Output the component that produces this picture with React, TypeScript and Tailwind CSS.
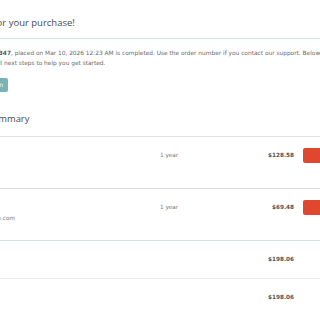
import React from "react";

const sans = { fontFamily: '"DejaVu Sans", "Open Sans", sans-serif' };

export default function App() {
  return (
    <div className="w-[320px] h-[320px] overflow-hidden bg-white relative" style={{ fontFamily: '"Open Sans", "Noto Sans", sans-serif' }}>
      <div className="h-[39px] border-b border-[#d4e6e8] pt-[16px]">
        <h1 className="ml-[-55px] text-[9.5px] leading-[13px] text-[#4a4a4a] whitespace-nowrap">Thank you for your purchase!</h1>
      </div>
      <div className="mt-[9px] text-[5.85px] leading-[10px] text-[#6a6a6a] whitespace-nowrap" style={sans}>
        <div className="ml-[-42px]">
          Your order <span className="font-bold text-[#555]">#1347</span>, placed on Mar 10, 2026 12:23 AM is completed. Use the order number if you contact our support. Below you will find your order details
        </div>
        <div className="ml-[-17.5px]">and all next steps to help you get started.</div>
      </div>
      <div
        className="mt-[10px] ml-[-32px] h-[14px] w-[40px] rounded-[2px] bg-[#79b3b6] text-white text-[6px] leading-[14px] text-right pr-[5px] whitespace-nowrap"
        style={sans}
      >
        Login
      </div>
      <div className="mt-[21px] h-[12px] ml-[-41px] text-[9.4px] leading-[12px] text-[#4a4a4a] whitespace-nowrap">Order Summary</div>
      <div className="mt-[11px] border-t border-[#e3e3e3] w-[360px]" style={sans}>
        <div className="h-[52px] border-b border-[#dcdcdc] flex items-start pt-[15px] text-[5.7px] leading-[7px]">
          <div className="w-[160px]" />
          <div className="w-[100px] text-[#777]">1 year</div>
          <div className="w-[34px] text-right font-bold text-[#555] text-[5.7px]">$128.58</div>
          <div className="ml-[9px] mt-[-4px] h-[15px] w-[40px] rounded-[2px] bg-[#e1462f]" />
        </div>
        <div className="h-[52px] border-b border-[#d3e3e3] flex items-start pt-[15px] text-[5.7px] leading-[7px]">
          <div className="w-[160px] relative">
            <div className="absolute right-[145px] top-[11px] text-[#777] whitespace-nowrap">user@example.com</div>
          </div>
          <div className="w-[100px] text-[#777]">1 year</div>
          <div className="w-[34px] text-right font-bold text-[#555] text-[5.7px]">$69.48</div>
          <div className="ml-[9px] mt-[-4px] h-[15px] w-[40px] rounded-[2px] bg-[#e1462f]" />
        </div>
        <div className="h-[38px] border-b border-[#ececec] flex items-start pt-[15px] text-[5.7px] leading-[7px]">
          <div className="w-[260px]" />
          <div className="w-[34px] text-right font-bold text-[#555]">$198.06</div>
        </div>
        <div className="h-[40px] flex items-start pt-[15px] text-[5.7px] leading-[7px]">
          <div className="w-[260px]" />
          <div className="w-[34px] text-right font-bold text-[#555]">$198.06</div>
        </div>
      </div>
    </div>
  );
}
